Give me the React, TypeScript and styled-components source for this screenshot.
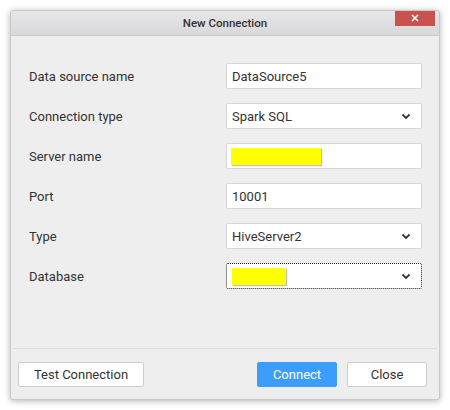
import styled, { createGlobalStyle } from "styled-components";

const Global = createGlobalStyle`
  body {
    margin: 0;
    background: #ffffff;
    font-family: Roboto, "Liberation Sans", sans-serif;
  }
`;

const Page = styled.div`
  width: 450px;
  height: 410px;
  padding: 10px;
  box-sizing: border-box;
`;

const Dialog = styled.div`
  width: 430px;
  height: 390px;
  background: #eeeeee;
  border: 1px solid #c8c8c8;
  border-radius: 3px;
  box-sizing: border-box;
  box-shadow: 0 1px 6px rgba(0, 0, 0, 0.3);
  display: flex;
  flex-direction: column;
  overflow: hidden;
`;

const TitleBar = styled.div`
  height: 25px;
  flex: none;
  background: linear-gradient(#e6e5e7, #d9d8da);
  border-bottom: 1px solid #c9c9c9;
  box-sizing: border-box;
  position: relative;
  display: flex;
  align-items: center;
  justify-content: center;
  font-size: 11.5px;
  font-weight: 500;
  color: #333333;
`;

const CloseX = styled.button`
  position: absolute;
  top: -1px;
  right: 4px;
  width: 40px;
  height: 16px;
  border: none;
  padding: 0;
  background: #c9514f;
  display: flex;
  align-items: center;
  justify-content: center;
`;

const Body = styled.div`
  flex: 1;
  padding: 27px 17px 0 18px;
  display: flex;
  flex-direction: column;
  gap: 14px;
`;

const Row = styled.div`
  display: flex;
  align-items: center;
  height: 26px;
`;

const Label = styled.div`
  width: 197px;
  font-size: 13px;
  color: #333333;
`;

const Field = styled.div<{ $focus?: boolean }>`
  width: 196px;
  height: 26px;
  box-sizing: border-box;
  background: #ffffff;
  border: 1px ${(p) => (p.$focus ? "dotted #222" : "solid #d6d6d6")};
  border-radius: 2px;
  display: flex;
  align-items: center;
  padding: 0 10px 0 4px;
  font-size: 13px;
  color: #333333;
`;

const Value = styled.span`
  flex: 1;
  padding-left: 1px;
`;

const Mask = styled.span<{ $w: number }>`
  display: block;
  width: ${(p) => p.$w}px;
  height: 17px;
  background: #ffff00;
  box-shadow: 1px 1px 1px rgba(0, 0, 0, 0.25);
`;

const Footer = styled.div`
  height: 51px;
  flex: none;
  margin: 0 2px;
  border-top: 1px solid #dddddd;
  box-sizing: border-box;
  display: flex;
  align-items: center;
  padding: 0 10px 0 5px;
  gap: 10px;
`;

const Button = styled.button<{ $primary?: boolean; $w: number }>`
  width: ${(p) => p.$w}px;
  height: 25px;
  box-sizing: border-box;
  border-radius: 2px;
  border: 1px solid ${(p) => (p.$primary ? "#3c9efa" : "#cccccc")};
  background: ${(p) => (p.$primary ? "#3c9efa" : "#ffffff")};
  color: ${(p) => (p.$primary ? "#ffffff" : "#333333")};
  font-family: Roboto, "Liberation Sans", sans-serif;
  font-size: 13px;
  padding: 0;
`;

const Spacer = styled.div`
  flex: 1;
`;

const Chevron = () => (
  <svg width="10" height="7" viewBox="0 0 10 7">
    <path d="M1.5 1.5 L5 5 L8.5 1.5" fill="none" stroke="#333" strokeWidth="1.8" />
  </svg>
);

export default function App() {
  return (
    <Page>
      <Global />
      <Dialog>
        <TitleBar>
          New Connection
          <CloseX>
            <svg width="8" height="8" viewBox="0 0 8 8">
              <path d="M1 1 L7 7 M7 1 L1 7" stroke="#fff" strokeWidth="1.6" />
            </svg>
          </CloseX>
        </TitleBar>
        <Body>
          <Row>
            <Label>Data source name</Label>
            <Field>
              <Value>DataSource5</Value>
            </Field>
          </Row>
          <Row>
            <Label>Connection type</Label>
            <Field>
              <Value>Spark SQL</Value>
              <Chevron />
            </Field>
          </Row>
          <Row>
            <Label>Server name</Label>
            <Field>
              <Mask $w={90} />
            </Field>
          </Row>
          <Row>
            <Label>Port</Label>
            <Field>
              <Value>10001</Value>
            </Field>
          </Row>
          <Row>
            <Label>Type</Label>
            <Field>
              <Value>HiveServer2</Value>
              <Chevron />
            </Field>
          </Row>
          <Row>
            <Label>Database</Label>
            <Field $focus>
              <Value>
                <Mask $w={54} />
              </Value>
              <Chevron />
            </Field>
          </Row>
        </Body>
        <Footer>
          <Button $w={126}>Test Connection</Button>
          <Spacer />
          <Button $primary $w={80}>
            Connect
          </Button>
          <Button $w={80}>Close</Button>
        </Footer>
      </Dialog>
    </Page>
  );
}
